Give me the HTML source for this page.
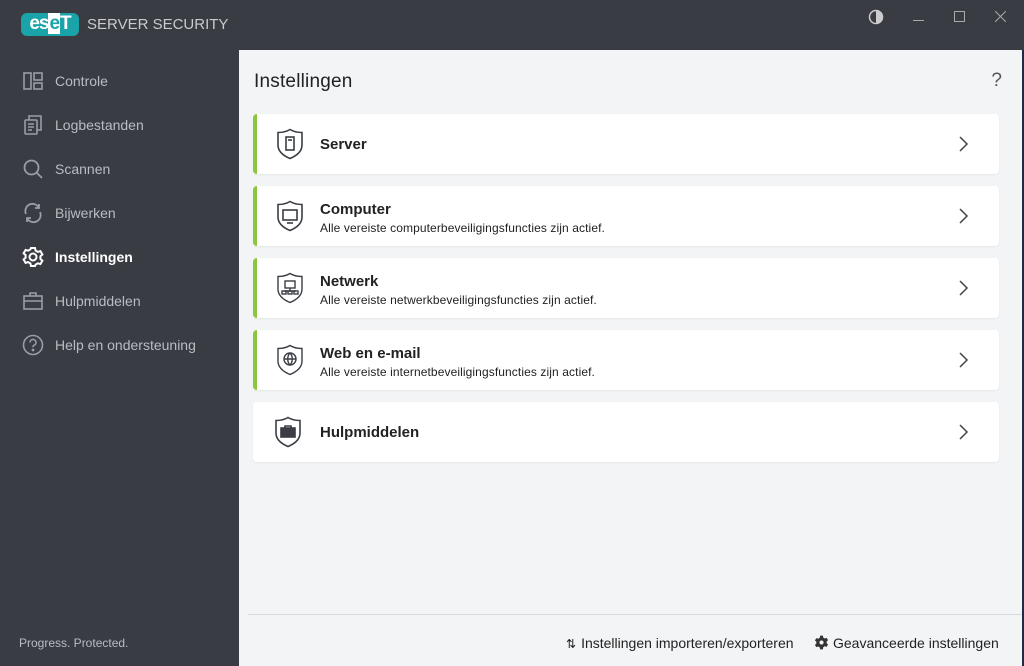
<!DOCTYPE html>
<html><head><meta charset="utf-8"><style>
*{margin:0;padding:0;box-sizing:border-box}
body{width:1024px;height:666px;overflow:hidden;background:#393c43;font-family:"Liberation Sans",sans-serif;position:relative}
.top{position:absolute;left:0;top:0;width:1024px;height:50px;background:#393c43}
.logo{position:absolute;left:21px;top:13px;width:58px;height:23px;background:#1aa3a8;border-radius:6px;color:#fff;font-weight:bold;font-size:19px;line-height:22px;text-align:center;letter-spacing:-1px}
.logo span{background:#fff;color:#1aa3a8;padding:0 1px}
.prod{position:absolute;left:87px;top:16px;color:#c9cbcf;font-size:15px;letter-spacing:0}
.side{position:absolute;left:0;top:50px;width:239px;height:616px;background:#393c43}
.nav{position:absolute;left:22px;height:22px;display:flex;align-items:center;color:#b9bcc2;font-size:14px}
.nav svg{width:22px;height:22px;margin-right:11px}
.nav.act{color:#fff;font-weight:bold}
.main{position:absolute;left:239px;top:50px;width:783px;height:616px;background:#f3f4f6}
.edge{position:absolute;left:1022px;top:50px;width:2px;height:616px;background:#1f2a44}
h1{position:absolute;left:15px;top:21px;font-size:19px;font-weight:normal;color:#222;letter-spacing:.2px}
.q{position:absolute;right:20px;top:20px;font-size:19px;color:#555}
.card{position:absolute;left:14px;width:746px;height:60px;background:#fff;border-radius:4px;box-shadow:0 1px 2px rgba(0,0,0,.06)}
.card.g{border-left:4px solid #8cc63f}
.card svg.ic{position:absolute;left:20px;top:14px;width:30px;height:32px}
.card.g svg.ic{left:18px}
.t{position:absolute;left:67px;font-size:15px;font-weight:bold;color:#222}
.card.g .t,.card.g .s{left:63px}
.s{position:absolute;left:67px;top:35px;font-size:12px;color:#222;letter-spacing:.1px}
.chev{position:absolute;right:30px;top:22px;width:10px;height:16px}
.foot{position:absolute;left:9px;top:564px;width:774px;height:1px;background:#d6d8db}
.fl{position:absolute;top:585px;font-size:14px;color:#222}
</style></head><body>
<div class="top">
<div class="logo">es<span>e</span>T</div>
<div class="prod">SERVER SECURITY</div>
<svg style="position:absolute;left:868px;top:9px" width="16" height="16"><circle cx="8" cy="8" r="6.5" fill="none" stroke="#ccc" stroke-width="1.5"/><path d="M8 1.5A6.5 6.5 0 0 1 8 14.5Z" fill="#ccc"/></svg>
<div style="position:absolute;left:913px;top:20px;width:11px;height:1px;background:#aaa"></div>
<div style="position:absolute;left:954px;top:11px;width:11px;height:11px;border:1px solid #aaa"></div>
<svg style="position:absolute;left:995px;top:11px" width="11" height="11"><path d="M0 0L11 11M11 0L0 11" stroke="#aaa"/></svg>
</div>
<div class="side">
<div class="nav" style="top:20px"><svg viewBox="0 0 22 22" fill="none" stroke="#9a9da3" stroke-width="1.6"><rect x="2" y="3" width="7" height="16"/><rect x="12" y="3" width="8" height="7"/><rect x="12" y="13" width="8" height="6"/></svg>Controle</div>
<div class="nav" style="top:64px"><svg viewBox="0 0 22 22" fill="none" stroke="#9a9da3" stroke-width="1.6"><rect x="3" y="6" width="12" height="14" rx="1"/><path d="M7 6V2h12v14h-4M6 10h6M6 13h6M6 16h4"/></svg>Logbestanden</div>
<div class="nav" style="top:108px"><svg viewBox="0 0 22 22" fill="none" stroke="#9a9da3" stroke-width="1.8"><circle cx="9.5" cy="9.5" r="7"/><path d="M14.5 14.5L20 20"/></svg>Scannen</div>
<div class="nav" style="top:152px"><svg viewBox="0 0 22 22" fill="none" stroke="#9a9da3" stroke-width="1.8"><path d="M4 12A7 7 0 0 1 17 6M18 10A7 7 0 0 1 5 16M17 2v4h-4M5 20v-4h4"/></svg>Bijwerken</div>
<div class="nav act" style="top:196px"><svg viewBox="0 0 22 22" fill="none" stroke="#fff" stroke-width="2"><circle cx="11" cy="11" r="3.5"/><path d="M9 2h4l.6 2.6 2.3 1.3 2.5-.8 2 3.4-2 1.8v2.6l2 1.8-2 3.4-2.5-.8-2.3 1.3L13 20H9l-.6-2.6-2.3-1.3-2.5.8-2-3.4 2-1.8V9.1l-2-1.8 2-3.4 2.5.8 2.3-1.3z"/></svg>Instellingen</div>
<div class="nav" style="top:240px"><svg viewBox="0 0 22 22" fill="none" stroke="#9a9da3" stroke-width="1.6"><rect x="2" y="6" width="18" height="13"/><path d="M8 6V3h6v3M2 11h18"/></svg>Hulpmiddelen</div>
<div class="nav" style="top:284px"><svg viewBox="0 0 22 22" fill="none" stroke="#9a9da3" stroke-width="1.6"><circle cx="11" cy="11" r="9.5"/><path d="M8 8.5a3 3 0 1 1 4 2.8c-.8.4-1 1-1 2"/><circle cx="11" cy="16" r=".6" fill="#9a9da3"/></svg>Help en ondersteuning</div>
<div style="position:absolute;left:19px;top:586px;color:#b9bcc2;font-size:12px">Progress. Protected.</div>
</div>
<div class="main">
<h1>Instellingen</h1><div class="q">?</div>
<div class="card g" style="top:64px"><svg class="ic" viewBox="0 0 30 32" fill="none" stroke="#3a3d44" stroke-width="1.6"><path d="M15 1.5C11 4 7 4.5 3 4.5V17c0 7 6 11 12 13.5C21 28 27 24 27 17V4.5C23 4.5 19 4 15 1.5Z"/><rect x="11" y="9" width="8" height="13"/><path d="M13 12h4"/></svg><div class="t" style="top:22px">Server</div><svg class="chev" viewBox="0 0 10 16"><path d="M1 1l7 7-7 7" fill="none" stroke="#444" stroke-width="1.5"/></svg></div>
<div class="card g" style="top:136px"><svg class="ic" viewBox="0 0 30 32" fill="none" stroke="#3a3d44" stroke-width="1.6"><path d="M15 1.5C11 4 7 4.5 3 4.5V17c0 7 6 11 12 13.5C21 28 27 24 27 17V4.5C23 4.5 19 4 15 1.5Z"/><rect x="8" y="10" width="14" height="10"/><path d="M12 23h6"/></svg><div class="t" style="top:15px">Computer</div><div class="s">Alle vereiste computerbeveiligingsfuncties zijn actief.</div><svg class="chev" viewBox="0 0 10 16"><path d="M1 1l7 7-7 7" fill="none" stroke="#444" stroke-width="1.5"/></svg></div>
<div class="card g" style="top:208px"><svg class="ic" viewBox="0 0 30 32" fill="none" stroke="#3a3d44" stroke-width="1.4"><path d="M15 1.5C11 4 7 4.5 3 4.5V17c0 7 6 11 12 13.5C21 28 27 24 27 17V4.5C23 4.5 19 4 15 1.5Z"/><rect x="10" y="9" width="10" height="7"/><path d="M15 16v3M9 19h12"/><rect x="7" y="19" width="4" height="3"/><rect x="13" y="19" width="4" height="3"/><rect x="19" y="19" width="4" height="3"/></svg><div class="t" style="top:15px">Netwerk</div><div class="s">Alle vereiste netwerkbeveiligingsfuncties zijn actief.</div><svg class="chev" viewBox="0 0 10 16"><path d="M1 1l7 7-7 7" fill="none" stroke="#444" stroke-width="1.5"/></svg></div>
<div class="card g" style="top:280px"><svg class="ic" viewBox="0 0 30 32" fill="none" stroke="#3a3d44" stroke-width="1.4"><path d="M15 1.5C11 4 7 4.5 3 4.5V17c0 7 6 11 12 13.5C21 28 27 24 27 17V4.5C23 4.5 19 4 15 1.5Z"/><circle cx="15" cy="15" r="6"/><path d="M9 15h12M15 9c-3 3-3 9 0 12M15 9c3 3 3 9 0 12"/></svg><div class="t" style="top:15px">Web en e-mail</div><div class="s">Alle vereiste internetbeveiligingsfuncties zijn actief.</div><svg class="chev" viewBox="0 0 10 16"><path d="M1 1l7 7-7 7" fill="none" stroke="#444" stroke-width="1.5"/></svg></div>
<div class="card" style="top:352px"><svg class="ic" viewBox="0 0 30 32" fill="none" stroke="#3a3d44" stroke-width="1.6"><path d="M15 1.5C11 4 7 4.5 3 4.5V17c0 7 6 11 12 13.5C21 28 27 24 27 17V4.5C23 4.5 19 4 15 1.5Z"/><rect x="8" y="12" width="14" height="9" fill="#3a3d44"/><path d="M12 12v-2h6v2"/></svg><div class="t" style="top:22px">Hulpmiddelen</div><svg class="chev" viewBox="0 0 10 16"><path d="M1 1l7 7-7 7" fill="none" stroke="#444" stroke-width="1.5"/></svg></div>
<div class="foot"></div>
<div class="fl" style="left:327px"><span style="font-size:12px;margin-right:5px">⇅</span>Instellingen importeren/exporteren</div>
<div class="fl" style="left:575px"><svg width="15" height="15" viewBox="0 0 22 22" style="vertical-align:-2px;margin-right:4px"><path fill="#333" fill-rule="evenodd" d="M9 1h4l.6 2.8 2.3 1.3 2.7-.9 2 3.4-2.1 1.9v2.6l2.1 1.9-2 3.4-2.7-.9-2.3 1.3L13 21H9l-.6-2.8-2.3-1.3-2.7.9-2-3.4 2.1-1.9V9.9L1.4 8l2-3.4 2.7.9 2.3-1.3zM11 8a3 3 0 1 0 0 6 3 3 0 0 0 0-6z"/></svg>Geavanceerde instellingen</div>
</div>
<div class="edge"></div>
</body></html>
